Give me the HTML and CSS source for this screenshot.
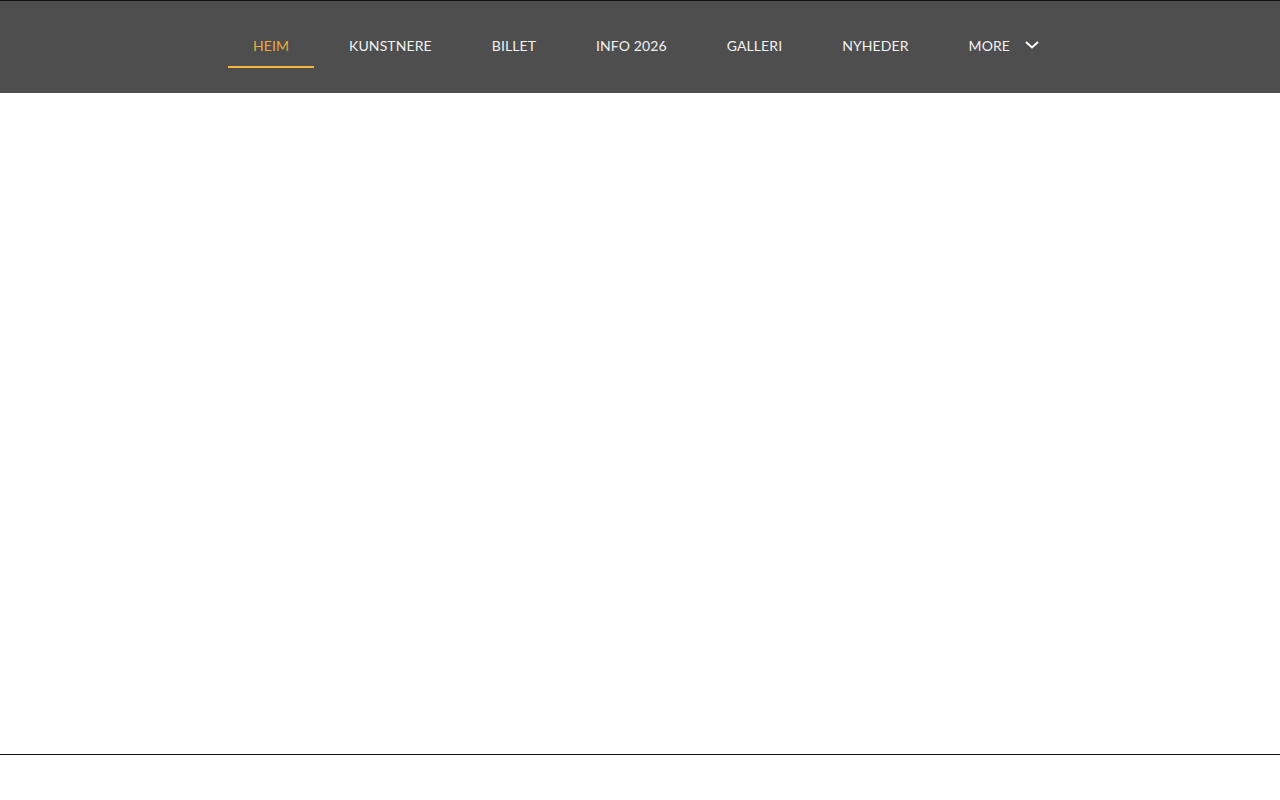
FILE: index.html
```html
<!DOCTYPE html>
<html lang="da">
<head>
<meta charset="utf-8">
<title>Heim</title>
<link rel="stylesheet" href="styles.css">
</head>
<body>
<header class="site-header">
  <nav class="main-nav">
    <a class="nav-item active" href="#">HEIM</a>
    <a class="nav-item" href="#">KUNSTNERE</a>
    <a class="nav-item" href="#">BILLET</a>
    <a class="nav-item" href="#">INFO 2026</a>
    <a class="nav-item" href="#">GALLERI</a>
    <a class="nav-item" href="#">NYHEDER</a>
    <a class="nav-item more" href="#">MORE
      <svg class="chevron" width="14" height="8" viewBox="0 0 14 8" aria-hidden="true"><path d="M1 1 L7 6.5 L13 1" fill="none" stroke="#fff" stroke-width="2"/></svg>
    </a>
  </nav>
</header>
<main class="content"></main>
<footer class="site-footer"></footer>
</body>
</html>
```
FILE: styles.css
```css
html, body {
  margin: 0;
  padding: 0;
  background: #fff;
}
body {
  font-family: "Lato", "Open Sans", "Liberation Sans", sans-serif;
}
.site-header {
  height: 92px;
  background: #4e4e4e;
  border-top: 1px solid #111;
}
.main-nav {
  display: flex;
  gap: 10px;
  padding-left: 228px;
  padding-top: 23px;
}
.nav-item {
  display: flex;
  align-items: center;
  gap: 15px;
  height: 44px;
  padding: 0 25px;
  box-sizing: border-box;
  color: #f2f2f2;
  text-decoration: none;
  font-size: 14px;
  font-weight: 400;
  letter-spacing: 0.1px;
  border-bottom: 2px solid transparent;
}
.nav-item.active {
  color: #e7ac3c;
  border-bottom-color: #f5b43c;
}
.chevron {
  display: block;
}
.content {
  height: 661px;
}
.site-footer {
  border-top: 1px solid #111;
  height: 45px;
}
```
